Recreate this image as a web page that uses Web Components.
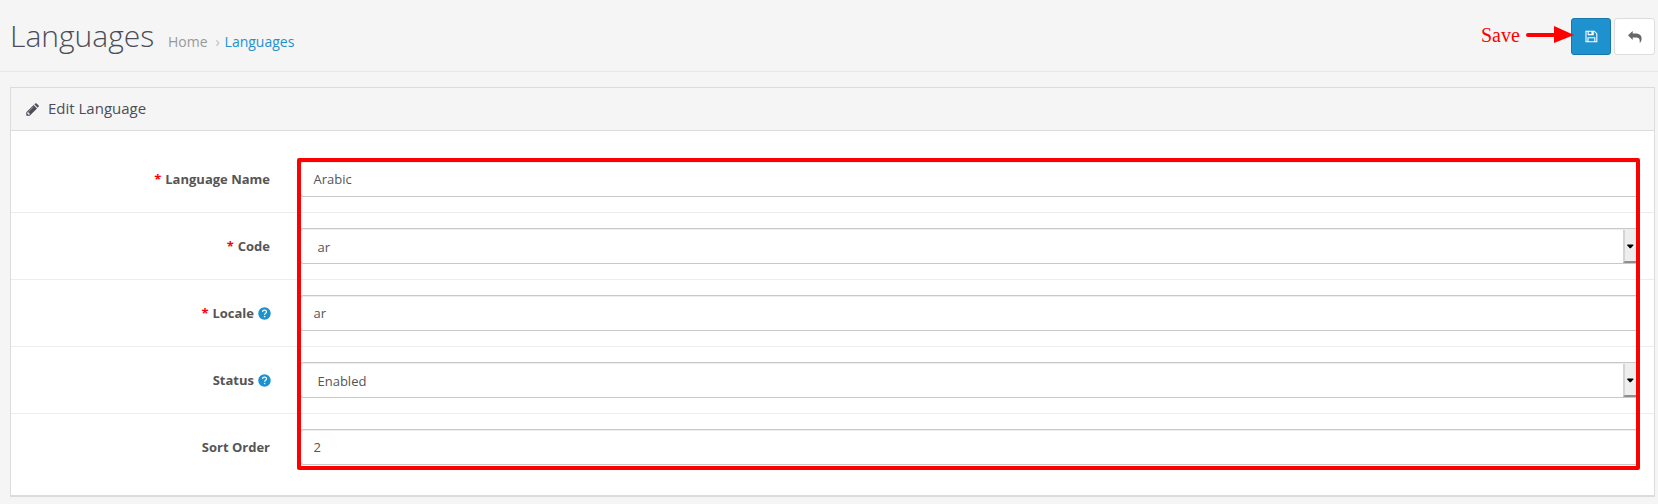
<!DOCTYPE html>
<html lang="en"><head><meta charset="utf-8"><title>Languages</title>
<style>
html,body{margin:0;height:504px;overflow:hidden;background:#f5f5f5}
body{font-family:"Open Sans",sans-serif;color:#4c4d5a}
</style></head><body>
<language-page></language-page>
<script>
function define(name, html){
  const t=document.createElement('template');t.innerHTML=html;
  customElements.define(name,class extends HTMLElement{
    constructor(){super();this.attachShadow({mode:'open'}).append(t.content.cloneNode(true));}
  });
}
define('help-icon',`<style>:host{display:block;white-space:normal;width:13px;height:13px;margin:0 -1px 0 4px}svg{display:block}</style>
<svg width="13" height="13" viewBox="0 0 13 13"><circle cx="6.5" cy="6.5" r="6.25" fill="#1e91cf"/><path d="M4.5 4.9C4.7 2.5 8.5 2.6 8.5 4.8C8.5 6.2 6.6 6.2 6.6 7.8" fill="none" stroke="#fff" stroke-width="1.2"/><path d="M5.9 8.9h1.4v1.3H5.9z" fill="#fff"/></svg>`);
define('text-field',`<style>:host{display:block;box-sizing:border-box;height:36px;width:1339px;border:1px solid #c8c8c8;border-radius:3px;background:#fff;box-shadow:inset 0 1px 1px rgba(0,0,0,.075);padding-left:12.5px;font-size:13px;line-height:34px;color:#555}</style><slot></slot>`);
define('select-field',`<style>:host{display:flex;box-sizing:border-box;height:36px;width:1339px;border:1px solid #c8c8c8;border-radius:3px;background:#fff;box-shadow:inset 0 1px 1px rgba(0,0,0,.075);font-size:13px;line-height:36px;color:#555;justify-content:space-between;padding-left:16.5px}
.b{box-sizing:border-box;width:15px;height:33px;margin-top:1px;background:#eee;border-left:2px solid #d4d4d4;border-bottom:2px solid #8e8e8e}svg{display:block;margin:14px 0 0 2px}</style><slot></slot><div class="b"><svg width="7" height="5" viewBox="0 0 7 5"><path d="M.3 .5h6v1L3.8 4.3h-1L.3 1.5z" fill="#000"/></svg></div>`);
define('form-row',`<style>:host{display:flex;box-sizing:border-box;height:67px;padding-top:15px;border-top:1px solid #ededed}
:host([first]){border-color:transparent}
.l{width:259px;margin-right:30px;display:flex;align-items:center;justify-content:flex-end;height:36px;font-size:13px;font-weight:700;color:#555;white-space:pre}
.r{color:#f00;margin-right:.5px}:host(:not([required])) .r{display:none}</style>
<div class="l"><span class="r">* </span><slot name="label"></slot></div><slot></slot>`);
define('icon-button',`<style>:host{display:flex;box-sizing:border-box;width:41px;height:37px;border:1px solid #ddd;border-radius:3px;background:#fff;align-items:center;justify-content:center}
:host([primary]){background:#1e91cf;border-color:#1978ab;width:40px}</style><slot></slot>`);
define('page-header',`<style>:host{display:flex;box-sizing:border-box;height:72px;border-bottom:1px solid #e7e7e7;padding:0 3px 0 10px;position:relative}
h1{margin:15px 0 0;font-weight:300;font-size:30px;line-height:41px;width:158px;white-space:nowrap}
nav{display:flex;font-size:14px;line-height:20px;margin-top:32px;color:#999}nav i{font-style:normal;color:#bbb;width:17px;box-sizing:border-box;padding-left:8px}nav b{font-weight:400;color:#1e91cf}
.a{display:flex;gap:3px;margin:18px 0 0 auto}
.n{position:absolute;left:1481px;top:22px;display:flex;color:#f00;font:20px/26px "Liberation Serif",serif}
.n svg{display:block;position:absolute;left:45px;top:3px}</style>
<h1>Languages</h1><nav><span>Home</span><i>›</i><b>Languages</b></nav>
<div class="a"><icon-button primary><svg width="13" height="13" viewBox="0 0 13 13"><path d="M1 1.2h8.3l2.5 2.5v8.1H1zM3.2 1v3.6h5V1M3 12V7.7h6.8V12" fill="none" stroke="#fff" stroke-width="1.1"/><path d="M6.4 1h1.7v3H6.4z" fill="#fff"/></svg></icon-button>
<icon-button><svg width="14" height="12" viewBox="0 0 14 12"><path d="M0 4.3L4.7 0v2.5H7c4.3 0 6.6 1.7 6.6 5 0 1.7-.5 3-1.5 4.3-.2.2-.5.1-.4-.2.4-3.8-.7-5-4.7-5H4.7v2.4z" fill="#666"/></svg></icon-button></div>
<div class="n"><span>Save</span><svg width="50" height="20" viewBox="0 0 50 20"><path d="M2 10H30" stroke="#f00" stroke-width="4" stroke-linecap="round"/><path d="M28 1L48 10 28 18z" fill="#f00"/></svg></div>`);
define('edit-panel',`<style>:host{display:block;box-sizing:border-box;position:relative;margin:15px 3px 0 10px;height:410px;border:1px solid #dcdcdc;border-bottom-width:2px;background:#fff}
header{display:flex;box-sizing:border-box;height:43px;border-bottom:1px solid #dcdcdc;background:#f5f5f5;padding:0 0 2px 15px;align-items:center;font-size:15px;line-height:20px}
header svg{margin:2px 9px 0 0}.f{padding-top:14px}
.o{position:absolute;box-sizing:border-box;left:286px;top:70px;width:1343px;height:312px;border:4px solid #f00;border-radius:2px}</style>
<header><svg width="13" height="13" viewBox="0 0 13 13"><path d="M.3 12.7V9.3L7.6 2l3.4 3.4-7.3 7.3zM8.3 1.3L9.2.4Q9.9-.1 10.6.4L12.6 2.4Q13.1 3.1 12.6 3.8L11.7 4.7z" fill="#4c4d5a"/><path d="M2.4 8.8L7.5 3.7" stroke="#a6a6ad" stroke-width=".8"/><path d="M1.2 9.8v1h1v1h1l.8-.8-2-2z" fill="#f5f5f5"/></svg><slot name="title"></slot></header><div class="f"><slot></slot></div><div class="o"></div>`);
define('language-page',`<style>:host{display:block;width:1658px;height:504px}</style>
<page-header></page-header>
<edit-panel><span slot="title">Edit Language</span>
<form-row first required><span slot="label">Language Name</span><text-field>Arabic</text-field></form-row>
<form-row required><span slot="label">Code</span><select-field>ar</select-field></form-row>
<form-row required><span slot="label">Locale</span><help-icon slot="label"></help-icon><text-field>ar</text-field></form-row>
<form-row><span slot="label">Status</span><help-icon slot="label"></help-icon><select-field>Enabled</select-field></form-row>
<form-row><span slot="label">Sort Order</span><text-field>2</text-field></form-row>
</edit-panel>`);
</script></body></html>
